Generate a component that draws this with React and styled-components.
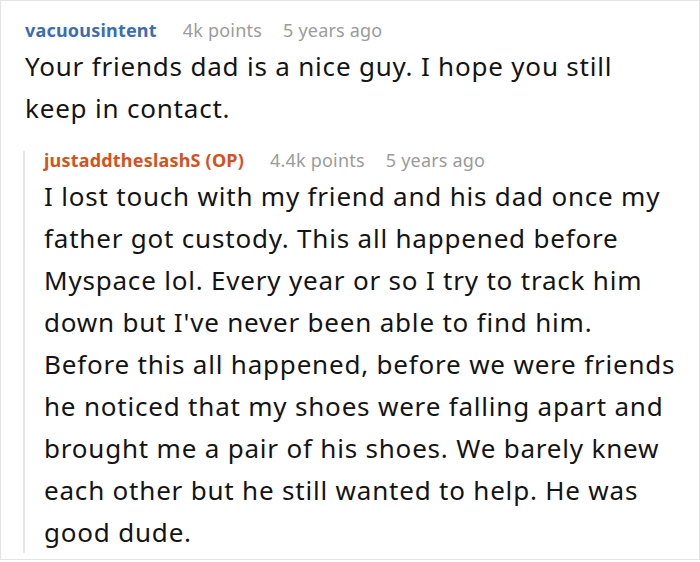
import React from "react";
import styled, { createGlobalStyle } from "styled-components";

const Global = createGlobalStyle`
  html, body { margin: 0; padding: 0; background: #fff; }
  body { font-family: "Noto Sans", "Open Sans", sans-serif; }
`;

const Frame = styled.div`
  box-sizing: border-box;
  width: 700px;
  height: 560px;
  border: 1px solid #e4e4e4;
  padding: 20px 6px 0 24px;
  overflow: hidden;
`;

const Comment = styled.div`
  display: flex;
  flex-direction: column;
`;

const Reply = styled.div`
  margin: 22px 0 0 -2px;
  border-left: 2px solid #e6e6e6;
  padding-left: 19px;
`;

const Header = styled.div`
  display: flex;
  align-items: baseline;
  gap: 21px;
  font-size: 18px;
  line-height: 18px;
  letter-spacing: 0.2px;
  margin-bottom: 6px;
`;

const Author = styled.span`
  font-weight: 700;
  color: ${(p) => (p.$op ? "#d4521e" : "#3b6cb5")};
  margin-right: 5px;
`;

const Meta = styled.span`
  color: #9b9b9b;
`;

const Body = styled.p`
  margin: 0;
  font-size: 26px;
  line-height: 42px;
  letter-spacing: 0.8px;
  color: #141414;
  white-space: pre-line;
  padding-right: ${(p) => p.$inset || 0}px;
`;

function CommentBlock({ author, op, points, time, text, inset, children }) {
  return (
    <Comment>
      <Header>
        <Author $op={op}>{author}</Author>
        <Meta>{points}</Meta>
        <Meta>{time}</Meta>
      </Header>
      <Body $inset={inset}>{text}</Body>
      {children}
    </Comment>
  );
}

export default function App() {
  return (
    <>
      <Global />
      <Frame>
        <CommentBlock
          author="vacuousintent"
          points="4k points"
          time="5 years ago"
          inset={28}
          text="Your friends dad is a nice guy. I hope you still keep in contact."
        >
          <Reply>
            <CommentBlock
              author="justaddtheslashS (OP)"
              op
              points="4.4k points"
              time="5 years ago"
              text={"I lost touch with my friend and his dad once my father got custody. This all happened before Myspace lol. Every year or so I try to track him down but I've never been able to find him.\nBefore this all happened, before we were friends he noticed that my shoes were falling apart and brought me a pair of his shoes. We barely knew each other but he still wanted to help. He was good dude."}
            />
          </Reply>
        </CommentBlock>
      </Frame>
    </>
  );
}
